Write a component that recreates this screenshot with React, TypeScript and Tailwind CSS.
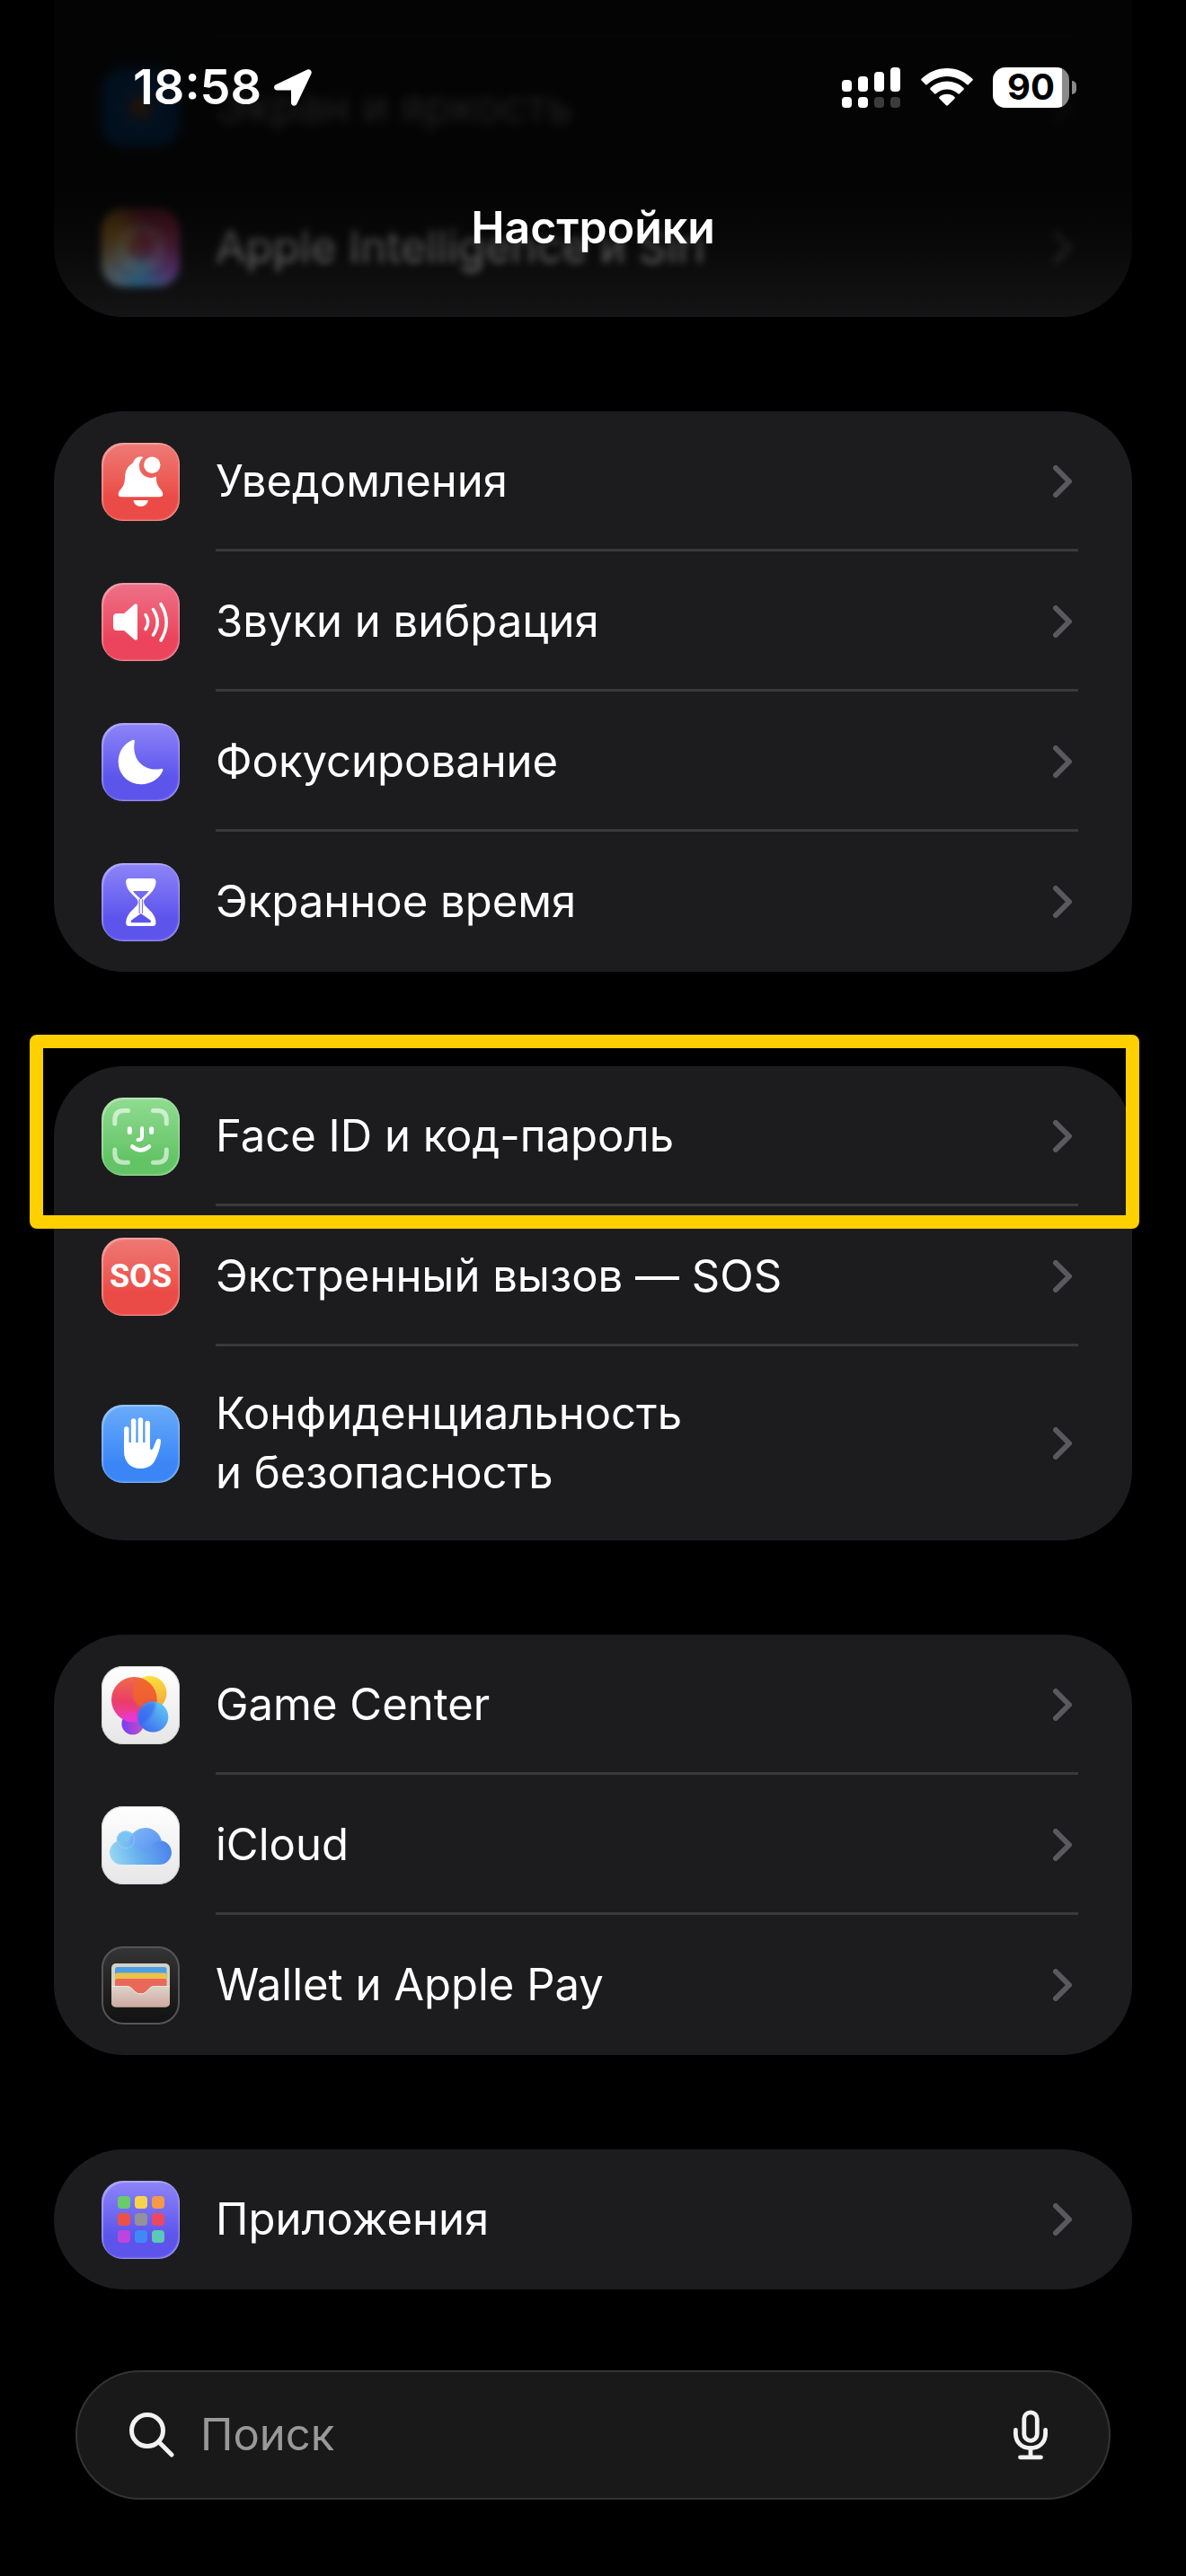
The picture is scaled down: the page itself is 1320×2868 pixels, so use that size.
import React from "react";

type Item = {
  key: string;
  name: string;
  icon: React.ReactNode;
};

const Tile = ({
  className,
  children,
}: {
  className: string;
  children: React.ReactNode;
}) => (
  <span
    className={`flex size-[87px] shrink-0 items-center justify-center overflow-hidden rounded-[24px] ${className}`}
  >
    {children}
  </span>
);

const Glyph = ({ children }: { children: React.ReactNode }) => (
  <svg viewBox="0 0 87 87" className="size-full" fill="none" aria-hidden="true">
    {children}
  </svg>
);

const glass =
  "shadow-[inset_2px_2px_1px_rgba(255,255,255,0.3),inset_-1px_-1px_2px_rgba(255,255,255,0.45)]";
const red = `bg-linear-to-b from-[#ee7a75] to-[#eb4b46] to-70% ${glass}`;
const pink = `bg-linear-to-b from-[#ee7189] to-[#eb445c] to-70% ${glass}`;
const purple = `bg-linear-to-b from-[#8f84f8] to-[#5d54ec] to-70% ${glass}`;
const green = `bg-linear-to-b from-[#90dc92] to-[#62c464] to-80% ${glass}`;
const blue = `bg-linear-to-b from-[#6aacfa] to-[#3a86f7] to-75% ${glass}`;
const white =
  "bg-linear-to-b from-white to-[#e6e6e6] shadow-[inset_0_0_0_1px_#d4d4d4]";
const dark =
  "bg-linear-to-b from-[#353535] to-[#111111] shadow-[inset_0_0_0_2px_#555555]";

const BrightnessIcon = () => (
  <Tile className="bg-[#0a78e8]">
    <Glyph>
      <circle cx="43.5" cy="43.5" r="12" fill="#f2994a" />
      <g stroke="#fff" strokeWidth="4" strokeLinecap="round" opacity="0.4">
        <path d="M43.5 17v7M43.5 63v7M17 43.5h7M63 43.5h7M25 25l5 5M57 57l5 5M25 62l5-5M57 30l5-5" />
      </g>
    </Glyph>
  </Tile>
);

const SiriIcon = () => (
  <Tile className="bg-[conic-gradient(from_0deg,#d0415f,#d8416f_60deg,#b05fd0_120deg,#4bb0f0_180deg,#8fb0c8_220deg,#e0a040_290deg,#e8a030_320deg,#d0415f)]">
    <Glyph>
      <circle cx="43.5" cy="43.5" r="13" fill="#d8607a" opacity="0.7" />
      <g stroke="#fff" strokeWidth="4" opacity="0.4">
        <ellipse cx="43.5" cy="43.5" rx="17" ry="27" />
        <ellipse cx="43.5" cy="43.5" rx="17" ry="27" transform="rotate(60 43.5 43.5)" />
        <ellipse cx="43.5" cy="43.5" rx="17" ry="27" transform="rotate(120 43.5 43.5)" />
      </g>
    </Glyph>
  </Tile>
);

const BellIcon = () => (
  <Tile className={red}>
    <Glyph>
      <path
        d="M46.500 16A13 13 0 0 0 60.800 37.500C61 43 61.500 46 64 49.500C66 52 68.300 54.500 68.300 57.200C68.300 59.200 67 60.200 65 60.200H22C20 60.200 18.700 59.200 18.700 57.200C18.700 54.500 21 52 23 49.500C26 45.500 25.800 41 26.300 36C27 29 30.500 25 35 22.500C36.500 17.500 40 14.300 46.500 16Z"
        fill="#fff"
      />
      <circle cx="56.300" cy="24.700" r="9.200" fill="#fff" />
      <path d="M35.500 64H51.800C51.300 68 48 70.800 43.600 70.800S36 68 35.500 64Z" fill="#fff" />
    </Glyph>
  </Tile>
);

const SoundIcon = () => (
  <Tile className={pink}>
    <Glyph>
      <path
        d="M17 34H25L36.500 24C38 22.600 40 23.200 40 25.500V61.500C40 63.800 38 64.400 36.500 63L25 53H17C14.500 53 13 51.500 13 49V38C13 35.500 14.500 34 17 34Z"
        fill="#fff"
      />
      <g stroke="#fff" strokeWidth="3.500" strokeLinecap="round">
        <path d="M49 35.500Q54.500 43.500 49 51.500" />
        <path d="M57.500 29.500Q67 43.700 57.500 58" />
        <path d="M66 23.500Q78.500 43.700 66 64" />
      </g>
    </Glyph>
  </Tile>
);

const MoonIcon = () => (
  <Tile className={purple}>
    <Glyph>
      <path
        d="M35 18.800C25 22.500 18.700 32 18.700 43C18.700 57.500 30 68.200 44 68.200C55 68.200 64.500 62 68.200 53C68.800 51.500 67.800 50.500 66 51C47.500 54.500 33 41 36.800 20.500C37.100 19 36.400 18.300 35 18.800Z"
        fill="#fff"
      />
    </Glyph>
  </Tile>
);

const HourglassIcon = () => (
  <Tile className={purple}>
    <Glyph>
      <path
        fillRule="evenodd"
        d="M30.500 17H57Q60.500 17 60.500 20.500C60.500 33 47 37.500 47 43.300C47 49.500 60.500 54 60.500 66.500Q60.500 70 57 70H30.500Q27.200 70 27.200 66.500C27.200 54 40.700 49.500 40.700 43.300C40.700 37.500 27.200 33 27.200 20.500Q27.200 17 30.500 17ZM35 31C37.500 35 42 37.500 43.800 40.500C45.600 37.500 50 35 52.700 31ZM43.800 56L33.300 63.500Q31.500 66.300 34.500 66.300H53.200Q56 66.300 54.400 63.500Z"
        fill="#fff"
      />
      <path d="M42.200 40V56M45.500 40V56" stroke="#7c74f2" strokeWidth="1.200" />
    </Glyph>
  </Tile>
);

const FaceIcon = () => (
  <Tile className={green}>
    <Glyph>
      <g stroke="#fff" strokeLinecap="round">
        <g strokeWidth="5" opacity="0.6">
          <path d="M14.800 29V25Q14.800 14.500 25 14.500H29.500" />
          <path d="M57.500 14.500H62Q72.300 14.500 72.300 25V29" />
          <path d="M14.800 58V62Q14.800 72.300 25 72.300H29.500" />
          <path d="M57.500 72.300H62Q72.300 72.300 72.300 62V58" />
        </g>
        <path d="M31.300 34.800V38.500M55.600 34.800V38.500" strokeWidth="5" />
        <path d="M45 34V43.500Q45 47 40.500 47" strokeWidth="4" />
        <path d="M34.200 54.500Q43.500 62.500 53 54.500" strokeWidth="4.500" />
      </g>
    </Glyph>
  </Tile>
);

const SosIcon = () => (
  <Tile className={red}>
    <span className="font-[Roboto,sans-serif] text-[36px] font-bold leading-none text-white">
      SOS
    </span>
  </Tile>
);

const HandIcon = () => (
  <Tile className={blue}>
    <Glyph>
      <g stroke="#fff" strokeWidth="5.500" strokeLinecap="round">
        <path d="M27.800 27V48M35.600 18V48M43.400 17V48M51.200 20.500V48" />
      </g>
      <path
        d="M25 42H54V48C54.500 51 56.500 50.500 57.500 48L61 39.500C62.500 36.500 66.500 37.500 66 41C65 50 62 57 59.500 62C56 68.500 50 71 43 71C32 71 25 63 25 52Z"
        fill="#fff"
      />
    </Glyph>
  </Tile>
);

const GameCenterIcon = () => (
  <Tile className={white}>
    <Glyph>
      <defs>
        <linearGradient id="gc-red" x1="0" y1="0" x2="0" y2="1">
          <stop stopColor="#ee6a4c" />
          <stop offset="0.550" stopColor="#ea3d68" />
          <stop offset="1" stopColor="#ee3cc8" />
        </linearGradient>
        <linearGradient id="gc-yellow" x1="0.300" y1="0" x2="0.500" y2="1">
          <stop stopColor="#fbe33c" />
          <stop offset="1" stopColor="#f3a63b" />
        </linearGradient>
        <linearGradient id="gc-purple" x1="0" y1="0" x2="1" y2="0">
          <stop stopColor="#7a3df5" />
          <stop offset="1" stopColor="#c04fc0" />
        </linearGradient>
        <linearGradient id="gc-blue" x1="1" y1="0" x2="0.200" y2="1">
          <stop stopColor="#66d4f2" />
          <stop offset="1" stopColor="#3a68f0" />
        </linearGradient>
        <clipPath id="gc-clip">
          <circle cx="36.300" cy="37.300" r="25.300" />
        </clipPath>
        <filter id="gc-soft">
          <feGaussianBlur stdDeviation="1.500" />
        </filter>
      </defs>
      <circle cx="34.700" cy="64" r="12.300" fill="url(#gc-purple)" />
      <circle cx="53.500" cy="30" r="19" fill="url(#gc-yellow)" />
      <circle cx="36.300" cy="37.300" r="25.300" fill="url(#gc-red)" />
      <g clipPath="url(#gc-clip)">
        <circle cx="53.500" cy="30" r="19" fill="#f06a20" opacity="0.750" filter="url(#gc-soft)" />
        <circle cx="34.700" cy="64" r="12.300" fill="#e334e8" opacity="0.600" filter="url(#gc-soft)" />
      </g>
      <circle cx="57.300" cy="56.500" r="17" fill="url(#gc-blue)" />
      <path d="M42 49A17 17 0 0 1 60 40C60 50 54 60 43 65A17 17 0 0 1 42 49Z" fill="#3558ee" opacity="0.550" filter="url(#gc-soft)" />
    </Glyph>
  </Tile>
);

const CloudIcon = () => (
  <Tile className={white}>
    <Glyph>
      <defs>
        <linearGradient id="cloud" x1="9" y1="60" x2="78" y2="40" gradientUnits="userSpaceOnUse">
          <stop stopColor="#98daf4" />
          <stop offset="0.450" stopColor="#67b0ee" />
          <stop offset="1" stopColor="#4a80ec" />
        </linearGradient>
        <linearGradient id="cloud-top" x1="30" y1="20" x2="66" y2="50" gradientUnits="userSpaceOnUse">
          <stop stopColor="#7fbcf6" />
          <stop offset="1" stopColor="#5c90f4" />
        </linearGradient>
      </defs>
      <circle cx="27" cy="37.500" r="10.300" fill="#7cc3f3" />
      <path
        d="M22.500 38C26 38 30 39 33 42L62 38C71 37 78 43.500 78 51.500C78 59 72 65 64.500 65H22.500C15 65 9 59 9 51.500S15 38 22.500 38Z"
        fill="url(#cloud)"
      />
      <path
        d="M30 41A18.700 18.700 0 0 1 66.700 38C58 39 52 45 52 52C45 51 38 44 30 41Z"
        fill="url(#cloud-top)"
      />
      <circle cx="27" cy="37.500" r="9.500" stroke="#a3dcf8" strokeWidth="1" opacity="0.500" />
    </Glyph>
  </Tile>
);

const WalletIcon = () => (
  <Tile className={dark}>
    <Glyph>
      <defs>
        <linearGradient id="pocket" x1="0" y1="0" x2="0" y2="1">
          <stop stopColor="#dcd4cb" />
          <stop offset="1" stopColor="#cfa9a1" />
        </linearGradient>
      </defs>
      <rect x="11" y="19" width="65" height="48.500" rx="5" fill="#d5d2c5" />
      <rect x="15" y="23" width="57.500" height="16" rx="2.500" fill="#4a9fe6" />
      <rect x="15" y="29.500" width="57.500" height="16" rx="2.500" fill="#edc24a" />
      <rect x="15" y="36" width="57.500" height="22" rx="2.500" fill="#e8695a" />
      <path
        d="M11 44H28C35 44 35.500 52.500 43.500 52.500S52 44 59 44H76V62.500Q76 67.500 71 67.500H16Q11 67.500 11 62.500Z"
        fill="url(#pocket)"
      />
      <path d="M11 44.500H28C35 44.500 35.500 53 43.500 53S52 44.500 59 44.500H76" stroke="#ece6de" strokeWidth="1" />
    </Glyph>
  </Tile>
);

const AppsIcon = () => (
  <Tile className={purple}>
    <span className="grid grid-cols-3 gap-[5px]">
      <span className="size-[14px] rounded-[4px] bg-[#6acb6a]" />
      <span className="size-[14px] rounded-[4px] bg-[#f8d24a]" />
      <span className="size-[14px] rounded-[4px] bg-[#f2994a]" />
      <span className="size-[14px] rounded-[4px] bg-[#eb5148]" />
      <span className="size-[14px] rounded-[4px] bg-[#929297]" />
      <span className="size-[14px] rounded-[4px] bg-[#ec4862]" />
      <span className="size-[14px] rounded-[4px] bg-[#be44de]" />
      <span className="size-[14px] rounded-[4px] bg-[#3f89f7]" />
      <span className="size-[14px] rounded-[4px] bg-[#5cc8b6]" />
    </span>
  </Tile>
);

const Chevron = () => (
  <svg
    viewBox="0 0 21 36"
    className="h-[36px] w-[21px] shrink-0"
    fill="none"
    stroke="#5a5a5e"
    strokeWidth="6"
    strokeLinecap="round"
    strokeLinejoin="round"
    aria-hidden="true"
  >
    <path d="M3 3l15 15L3 33" />
  </svg>
);

const Row = ({ item, last }: { item: Item; last: boolean }) => (
  <a href="#" className="flex items-stretch gap-[40px] pl-[53px] pr-[60px]">
    <span className="flex items-center">{item.icon}</span>
    <span
      className={`flex min-h-[156px] flex-1 items-center justify-between py-[42px] pr-[7px] ${
        last ? "" : "shadow-[inset_0_-3px_0_#39393b]"
      }`}
    >
      <span className="whitespace-pre-line">{item.name}</span>
      <Chevron />
    </span>
  </a>
);

const Group = ({
  items,
  children,
}: {
  items: Item[];
  children?: React.ReactNode;
}) => (
  <section className="relative rounded-[78px] bg-[#1c1c1e]">
    <ul>
      {items.map((item, index) => (
        <li key={item.key}>
          <Row item={item} last={index === items.length - 1} />
        </li>
      ))}
    </ul>
    {children}
  </section>
);

const notifications: Item[] = [
  { key: "notifications", name: "Уведомления", icon: <BellIcon /> },
  { key: "sounds", name: "Звуки и вибрация", icon: <SoundIcon /> },
  { key: "focus", name: "Фокусирование", icon: <MoonIcon /> },
  { key: "screen-time", name: "Экранное время", icon: <HourglassIcon /> },
];

const security: Item[] = [
  { key: "face-id", name: "Face ID и код-пароль", icon: <FaceIcon /> },
  { key: "sos", name: "Экстренный вызов — SOS", icon: <SosIcon /> },
  {
    key: "privacy",
    name: "Конфиденциальность\nи безопасность",
    icon: <HandIcon />,
  },
];

const services: Item[] = [
  { key: "game-center", name: "Game Center", icon: <GameCenterIcon /> },
  { key: "icloud", name: "iCloud", icon: <CloudIcon /> },
  { key: "wallet", name: "Wallet и Apple Pay", icon: <WalletIcon /> },
];

const apps: Item[] = [
  { key: "apps", name: "Приложения", icon: <AppsIcon /> },
];

const StatusBar = () => (
  <div className="flex h-[90px] items-center justify-between pl-[148px] pr-[122px]">
    <div className="flex items-center gap-[14px]">
      <span className="text-[54px] font-semibold leading-[66px]">18:58</span>
      <svg viewBox="0 0 42 41" className="h-[41px] w-[42px]" aria-hidden="true">
        <path
          d="M36.500 .8C39.500-.8 42.600 1.500 41.500 5L25.500 38.500C23.800 42 19 41 19 37.500V23.500H3.500C-.3 23.500-1.200 19 2 17.300Z"
          fill="#fff"
        />
      </svg>
    </div>
    <div className="flex items-center">
      <svg viewBox="0 0 65 45" className="mr-[23px] h-[45px] w-[65px]" fill="#fff" aria-hidden="true">
        <rect x="0" y="14" width="11" height="13" rx="4" />
        <rect x="18" y="10" width="11" height="17" rx="4" />
        <rect x="36" y="5" width="11" height="22" rx="4" />
        <rect x="54" y="0" width="11" height="27" rx="4" />
        <rect x="0" y="33" width="11" height="12" rx="4" />
        <rect x="18" y="33" width="11" height="12" rx="4" />
        <rect x="36" y="33" width="11" height="12" rx="4" opacity="0.22" />
        <rect x="54" y="33" width="11" height="12" rx="4" opacity="0.22" />
      </svg>
      <svg viewBox="0 0 58 42" className="mr-[22px] h-[42px] w-[58px]" fill="#fff" aria-hidden="true">
        <path d="M.6 11.800C8 4.500 18 0 29 0S50 4.500 57.400 11.800Q58.300 12.700 57.400 13.600L53 18Q52 19 51 18.100C45 12.500 37.500 9 29 9S13 12.500 7 18.100Q6 19 5 18L.6 13.600Q-.3 12.700 .6 11.800Z" />
        <path d="M10.500 22C15.500 17.300 22 14.500 29 14.500S42.500 17.300 47.500 22Q48.300 22.900 47.500 23.800L43 28.200Q42.100 29 41.200 28.300C37.900 25.300 33.700 23.500 29 23.500S20.100 25.300 16.800 28.300Q15.900 29 15 28.200L10.500 23.800Q9.700 22.900 10.500 22Z" />
        <path d="M20.500 32C22.800 30 25.700 28.800 29 28.800S35.200 30 37.500 32Q38.300 32.800 37.500 33.700L30 41.300Q29 42.200 28 41.300L20.500 33.700Q19.700 32.800 20.500 32Z" />
      </svg>
      <span className="flex items-center gap-[3px]">
        <span className="flex h-[45px] w-[85px] items-center justify-center rounded-[14px] bg-[linear-gradient(to_right,#fff_77px,#8a8a8a_77px)] text-[40px] font-bold leading-none text-black">
          90
        </span>
        <span className="h-[15px] w-[5px] rounded-r-full bg-[#8a8a8a]" />
      </span>
    </div>
  </div>
);

const SearchBar = () => (
  <form
    role="search"
    className="mx-[84px] mt-[90px] flex h-[144px] items-center rounded-full border-2 border-[#333334] bg-[#191919] pl-[58px] pr-[68px]"
  >
    <label htmlFor="search" className="flex items-center">
      <svg
        viewBox="0 0 50 50"
        className="size-[50px]"
        fill="none"
        stroke="#f2f2f2"
        strokeWidth="5"
        strokeLinecap="round"
        role="img"
        aria-label="Поиск"
      >
        <circle cx="20" cy="20" r="17.500" />
        <path d="M33 33L47 47" />
      </svg>
    </label>
    <input
      id="search"
      type="search"
      placeholder="Поиск"
      className="ml-[29px] min-w-0 flex-1 bg-transparent outline-none placeholder:text-[#999999]"
    />
    <button type="button" aria-label="Диктовка">
      <svg
        viewBox="0 0 38 56"
        className="h-[56px] w-[38px]"
        fill="none"
        stroke="#f2f2f2"
        strokeWidth="4.800"
        strokeLinecap="round"
        aria-hidden="true"
      >
        <rect x="11.800" y="2.800" width="14.500" height="31.500" rx="7.250" />
        <path d="M2.400 22.500V26.500C2.400 36 9 42.600 19 42.600S35.600 36 35.600 26.500V22.500" />
        <path d="M19 43V52.500M7.500 52.800H30.500" />
      </svg>
    </button>
  </form>
);

const App = () => {
  return (
    <div className="relative min-h-dvh overflow-hidden bg-black pb-[84px] font-[Inter,sans-serif] text-[49px] leading-[66px] text-white">
      <main className="flex flex-col gap-[105px] px-[60px]">
        {/* rows scrolled under the header */}
        <section className="rounded-b-[78px] bg-[#1c1c1e]">
          <div className="ml-[180px] mr-[60px] h-[41px] shadow-[inset_0_-3px_0_#252527]" />
          <ul>
            <li className="blur-[6px]">
              <Row
                item={{ key: "display", name: "Экран и яркость", icon: <BrightnessIcon /> }}
                last
              />
            </li>
            <li className="blur-[4px]">
              <Row
                item={{ key: "siri", name: "Apple Intelligence и Siri", icon: <SiriIcon /> }}
                last
              />
            </li>
          </ul>
        </section>

        <Group items={notifications} />
        <Group items={security}>
          {/* highlight frame */}
          <div className="pointer-events-none absolute -left-[27px] -right-[8px] -top-[35px] h-[216px] rounded-[8px] border-[15px] border-[#ffd000]" />
        </Group>
        <Group items={services} />
        <Group items={apps} />
      </main>

      <SearchBar />

      {/* header */}
      <header className="absolute inset-x-0 top-0 h-[390px] bg-[linear-gradient(to_bottom,rgba(0,0,0,0.87)_0px,rgba(0,0,0,0.87)_190px,rgba(0,0,0,0.8)_240px,rgba(0,0,0,0.68)_275px,rgba(0,0,0,0.46)_320px,rgba(0,0,0,0.28)_353px,transparent_390px)] pt-[52px]">
        <StatusBar />
        <h1 className="mt-[78px] text-center text-[50px] font-semibold">Настройки</h1>
      </header>
    </div>
  );
};

export default App;
